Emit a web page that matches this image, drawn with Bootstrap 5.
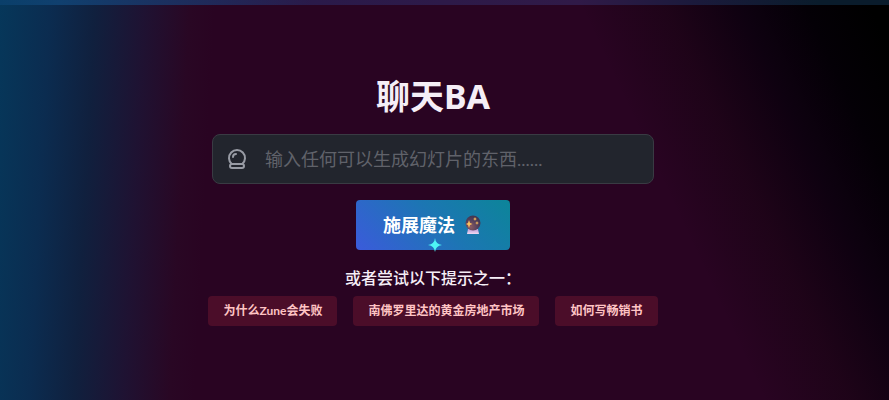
<!DOCTYPE html>
<html lang="zh-CN">
<head>
<meta charset="utf-8">
<meta name="viewport" content="width=device-width, initial-scale=1">
<title>聊天BA</title>
<link href="https://cdn.jsdelivr.net/npm/bootstrap@5.3.0/dist/css/bootstrap.min.css" rel="stylesheet">
<style>
body {
  font-family: "Noto Sans", "Noto Sans CJK SC", sans-serif;
  color: #f5eef6;
  background:
    linear-gradient(65deg, transparent 71%, rgba(14, 3, 10, .4) 79%, rgba(8, 0, 12, .82) 86%, #040006 92%, #000 98%),
    linear-gradient(93deg, #06375a 0, #0b2c50 50px, #10203e 95px, #1f1232 145px, #290724 190px, #290422 215px);
}
.top-strip {
  height: 5px;
  background: linear-gradient(90deg, #0a3f6a 0, #10406f 60px, #2a1a4a 35%, #301a48 65%, #1b1a3c 78%, #0a1c2c 92%);
}
.page-main { padding: 0 23px 3px 0; }
.page-title { font-size: 34px; line-height: 40px; font-weight: 700; margin: 0 0 18px; }
.prompt-box {
  width: 100%;
  max-width: 442px;
  height: 50px;
  padding: 0 12px;
  background: #22252d;
  border: 1px solid #393b43;
  border-radius: 8px;
  color: #989ba4;
}
.prompt-box input, .prompt-box input:focus {
  background: transparent;
  color: #e6e6ec;
  font-family: Lato, "Noto Sans CJK SC", sans-serif;
  font-size: 18px;
}
.prompt-box input::placeholder { color: #60626a; opacity: 1; }
.cast-btn, .cast-btn:hover {
  width: 154px;
  height: 50px;
  padding: 0;
  border: 0;
  border-radius: 4px;
  color: #fff;
  font-size: 18px;
  font-weight: 700;
  background: linear-gradient(45deg, #3b5bdb 0, #1c76b3 55%, #0c8599 100%);
}
.sparkle { top: 38px; left: 72px; }
.hint { font-size: 16px; line-height: 24px; font-weight: 500; margin: 16px 0 6px; }
.chip, .chip:hover {
  height: 30px;
  padding: 0 15px;
  border: 0;
  border-radius: 4px;
  background: #4b0d29;
  color: #ffc4c4;
  font-family: Lato, "Noto Sans CJK SC", sans-serif;
  font-size: 12px;
  font-weight: 700;
}
</style>
<script src="https://cdn.jsdelivr.net/npm/bootstrap@5.3.0/dist/js/bootstrap.bundle.min.js"></script>
</head>
<body class="min-vh-100 d-flex flex-column">
<div class="top-strip"></div>
<main class="page-main flex-grow-1 d-flex flex-column align-items-center justify-content-center">
  <h1 class="page-title">聊天BA</h1>
  <form class="w-100 d-flex flex-column align-items-center gap-3">
    <div class="prompt-box d-flex align-items-center">
      <svg class="flex-shrink-0" width="24" height="24" viewBox="0 0 24 24" fill="none" stroke="currentColor" stroke-width="2" stroke-linecap="round" stroke-linejoin="round" aria-hidden="true">
        <path d="M6.73 17.018a8 8 0 1 1 10.54 0"/>
        <path d="M5 19a2 2 0 0 0 2 2h10a2 2 0 1 0 0 -4h-10a2 2 0 0 0 -2 2z"/>
        <path d="M11 7a3 3 0 0 0 -3 3"/>
      </svg>
      <input class="form-control border-0 shadow-none p-0 ms-3" type="text" aria-label="幻灯片主题" placeholder="输入任何可以生成幻灯片的东西......">
    </div>
    <button class="btn cast-btn position-relative d-flex align-items-center justify-content-center gap-2" type="button">
      <span>施展魔法</span>
      <svg width="20" height="20" viewBox="0 0 18 20" aria-hidden="true">
        <defs>
          <radialGradient id="ball" cx=".35" cy=".75" r=".8"><stop offset="0" stop-color="#8a5a62"/><stop offset=".55" stop-color="#54405c"/><stop offset="1" stop-color="#3d3550"/></radialGradient>
          <linearGradient id="stand" x2="0" y2="1"><stop offset="0" stop-color="#b79ad6"/><stop offset="1" stop-color="#efd9f2"/></linearGradient>
        </defs>
        <path d="M4 14h10l1 5H3z" fill="url(#stand)"/>
        <circle cx="9" cy="8" r="7.500" fill="url(#ball)"/>
        <path d="M5 5l1 3 2.500 1L6 10l-1 3-1-3-2-1 2-1zM11 2l.6 1.600L13 4l-1.400.6L11 6l-.6-1.400L9 4l1.400-.4zM13 6l.5 1.500L15 8l-1.500.5L13 10l-.5-1.500L11 8l1.500-.5z" fill="#ffc15c"/>
      </svg>
      <svg class="sparkle position-absolute" width="14" height="14" viewBox="0 0 14 14" aria-hidden="true"><path d="M7 0Q7.500 6 14 7Q7.500 8 7 14Q6.500 8 0 7Q6.500 6 7 0z" fill="#4df5f5"/></svg>
    </button>
  </form>
  <p class="hint">或者尝试以下提示之一：</p>
  <div class="d-flex flex-wrap justify-content-center gap-3">
    <button class="btn chip" type="button">为什么Zune会失败</button>
    <button class="btn chip" type="button">南佛罗里达的黄金房地产市场</button>
    <button class="btn chip" type="button">如何写畅销书</button>
  </div>
</main>
</body>
</html>
